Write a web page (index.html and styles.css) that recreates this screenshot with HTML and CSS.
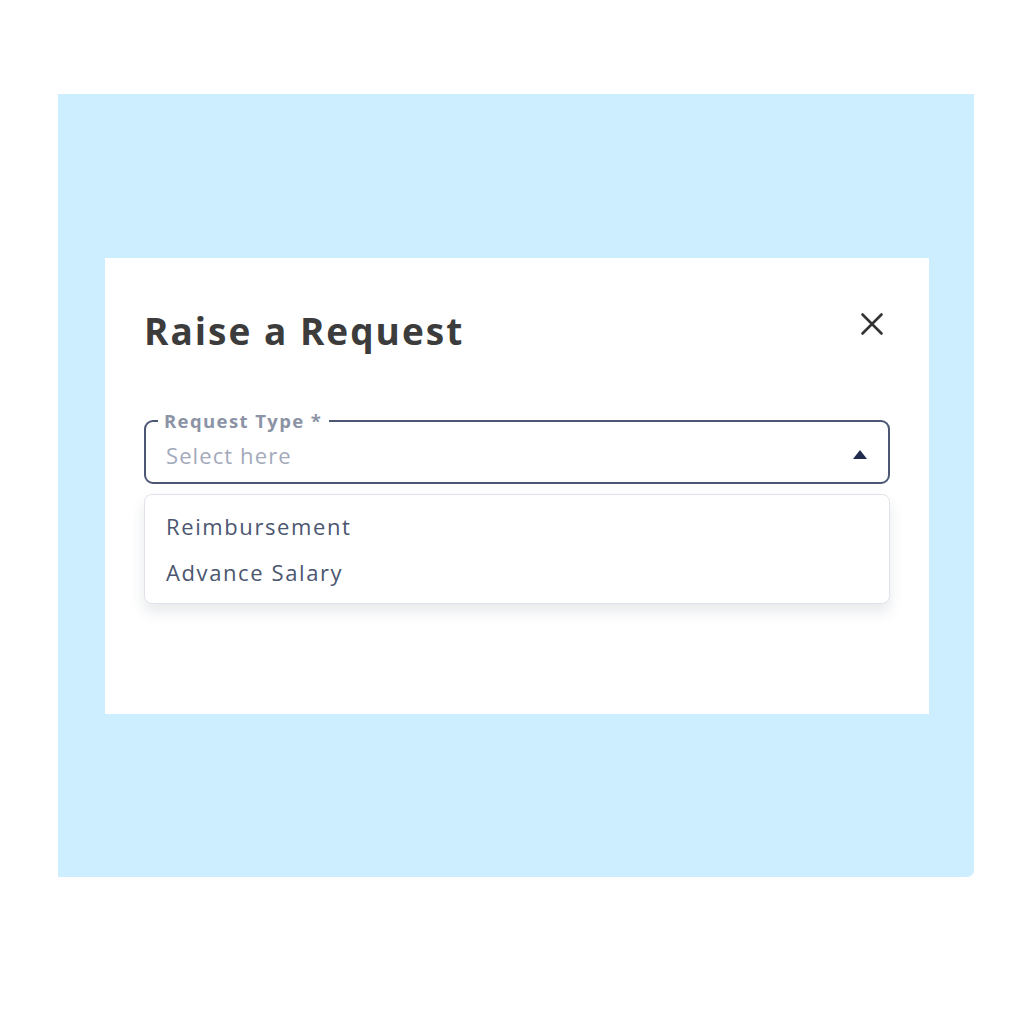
FILE: index.html
```html
<!DOCTYPE html>
<html>
<head>
<meta charset="utf-8">
<link rel="stylesheet" href="styles.css">
</head>
<body>
<div class="panel">
  <div class="card">
    <div class="card-head">
      <h1 class="title">Raise a Request</h1>
      <button class="close" aria-label="Close">
        <svg width="24" height="24" viewBox="0 0 24 24"><path d="M2.5 2.5 L21.5 21.5 M21.5 2.5 L2.5 21.5" stroke="#333" stroke-width="2.6" stroke-linecap="round" fill="none"/></svg>
      </button>
    </div>
    <fieldset class="field">
      <legend class="label">Request Type *</legend>
      <div class="field-row">
        <span class="placeholder">Select here</span>
        <svg class="arrow" width="14" height="9" viewBox="0 0 14 9"><path d="M7 0 L14 9 L0 9 Z" fill="#1f2c4e"/></svg>
      </div>
    </fieldset>
    <ul class="menu">
      <li class="item">Reimbursement</li>
      <li class="item">Advance Salary</li>
    </ul>
  </div>
</div>
</body>
</html>
```
FILE: styles.css
```css
* { box-sizing: border-box; }
html, body { margin: 0; padding: 0; background: #fff; }
body { font-family: "Open Sans", "Noto Sans", sans-serif; }
.panel {
  margin: 94px 0 0 58px;
  width: 916px;
  height: 783px;
  background: #cdeefe;
  border-radius: 0 0 7px 0;
  padding: 164px 0 0 47px;
}
.card {
  width: 824px;
  height: 456px;
  background: #fff;
  padding: 50px 39px 0 39px;
}
.card-head {
  display: flex;
  justify-content: space-between;
  align-items: flex-start;
}
.title {
  margin: 0 0 0 0;
  font-size: 37px;
  font-weight: 700;
  color: #3c3c3c;
  letter-spacing: 2px;
  line-height: 46px;
}
.close {
  border: 0;
  background: none;
  padding: 0;
  margin: 4px 6px 0 0;
  width: 24px;
  height: 24px;
}
.close svg { display: block; }
.field {
  margin: 57px 0 0 0;
  padding: 0 21px 0 21px;
  border: 2px solid #4b5773;
  border-radius: 9px;
  height: 73px;
}
.label {
  padding: 0 7px 0 6px;
  font-size: 18.5px;
  font-weight: 700;
  color: #8b93a5;
  letter-spacing: 1.4px;
  line-height: 20px;
  margin-left: -9px;
}
.field-row {
  display: flex;
  align-items: center;
  justify-content: space-between;
  height: 44px;
  margin-top: 2px;
}
.placeholder {
  font-size: 22px;
  color: #a3aabb;
  letter-spacing: 1.1px;
  margin-left: -1px;
}
.arrow { margin-right: 0; display: block; margin-top: -2px; }
.menu {
  list-style: none;
  margin: 10px 0 0 0;
  padding: 8px 0;
  border: 1px solid #e1e3ea;
  border-radius: 8px;
  background: #fff;
  box-shadow: 0 8px 14px rgba(60, 70, 100, 0.12);
  height: 110px;
}
.item {
  padding: 0 21px;
  font-size: 22px;
  color: #4b5670;
  line-height: 46px;
  letter-spacing: 1.6px;
}
```
